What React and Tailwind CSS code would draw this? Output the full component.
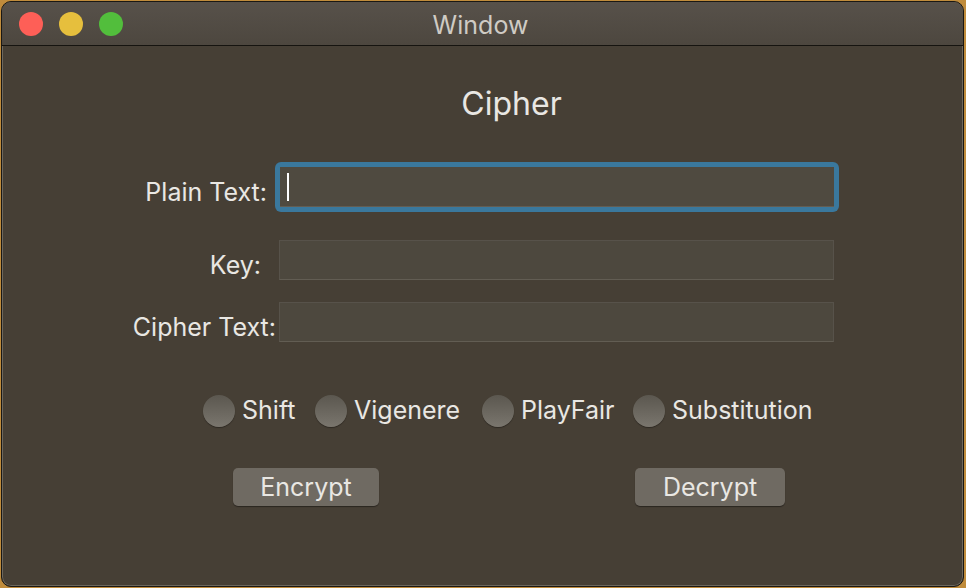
export default function App() {
  const font = { fontFamily: 'Inter, "Noto Sans", sans-serif' };
  const radios = [
    ["Shift", "w-[112px]"],
    ["Vigenere", "w-[167px]"],
    ["PlayFair", "w-[151px]"],
    ["Substitution", "w-[190px]"],
  ];
  return (
    <div className="w-[966px] h-[588px] bg-[#c08c3c] pt-[1px] pl-[1px] overflow-hidden" style={font}>
      <div className="w-[963px] h-[586px] rounded-[10px] border border-[#1a1814] bg-[#463f35] overflow-hidden flex flex-col shadow-[inset_0_0_0_1px_#6d685e]">
        <div className="h-[44px] shrink-0 flex items-center relative bg-gradient-to-b from-[#57514a] to-[#4d473f] border-b border-[#161410]">
          <div className="flex gap-[16px] pl-[17px]">
            <div className="w-[24px] h-[24px] rounded-full bg-[#fe5f57]" />
            <div className="w-[24px] h-[24px] rounded-full bg-[#e6bf3d]" />
            <div className="w-[24px] h-[24px] rounded-full bg-[#52be3c]" />
          </div>
          <div className="absolute inset-0 flex items-center justify-center text-[25px] text-[#cfcbc4] pr-[4px] pt-[5px]">Window</div>
        </div>
        <div className="flex-1 flex flex-col text-[#e9e7e3]">
          <div className="text-[32px] text-center pl-[58px] mt-[39px] leading-[38px]">Cipher</div>
          <div className="flex items-center mt-[39px] h-[50px]">
            <div className="w-[266px] text-right text-[25px] pr-[1px] pt-[11px]">Plain Text:</div>
            <div className="ml-[7px] w-[564px] h-[50px] rounded-[6px] bg-[#3a789d] p-[5px]">
              <div className="w-full h-full bg-[#4f4a40] border-b border-[#625d53] flex items-center pl-[7px]">
                <div className="w-[2px] h-[28px] bg-white" />
              </div>
            </div>
          </div>
          <div className="flex items-center mt-[28px] h-[40px]">
            <div className="w-[259px] text-right text-[25px] pt-[11px]">Key:</div>
            <div className="ml-[18px] w-[555px] h-[40px] bg-[#4d483e] border border-[#57524a] border-b-[#625d53]" />
          </div>
          <div className="flex items-center mt-[22px] h-[40px]">
            <div className="w-[274px] text-right text-[25px] pt-[11px]">Cipher Text:</div>
            <div className="ml-[3px] w-[555px] h-[40px] bg-[#4d483e] border border-[#57524a] border-b-[#625d53]" />
          </div>
          <div className="flex items-center mt-[52px] pl-[201px] h-[34px]">
            {radios.map(([r, w]) => (
              <div key={r} className={"flex items-center " + w}>
                <div className="w-[32px] h-[32px] rounded-full bg-gradient-to-b from-[#5b574f] to-[#7a766e] shadow-[0_1px_1px_rgba(0,0,0,0.35)]" />
                <span className="ml-[7px] text-[25px]">{r}</span>
              </div>
            ))}
          </div>
          <div className="flex mt-[40px] h-[38px]">
            <div className="ml-[231px] w-[146px] h-[38px] rounded-[5px] bg-[#6f6a62] shadow-[0_1px_1px_rgba(0,0,0,0.4)] flex items-center justify-center text-[25px] pt-[2px]">Encrypt</div>
            <div className="ml-[256px] w-[150px] h-[38px] rounded-[5px] bg-[#6f6a62] shadow-[0_1px_1px_rgba(0,0,0,0.4)] flex items-center justify-center text-[25px] pt-[2px]">Decrypt</div>
          </div>
        </div>
      </div>
    </div>
  );
}
